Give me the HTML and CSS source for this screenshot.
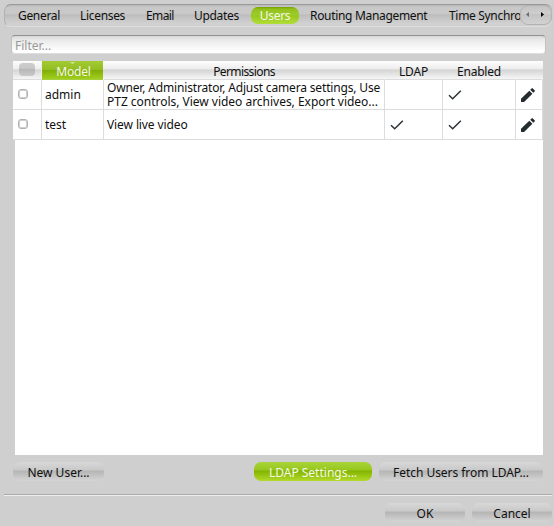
FILE: index.html
```html
<!DOCTYPE html>
<html lang="en">
<head>
<meta charset="utf-8">
<title>Users</title>
<link rel="stylesheet" href="styles.css">
</head>
<body>
<svg class="defs" aria-hidden="true">
  <symbol id="check" viewBox="0 0 14 12"><path d="M1 6.2 4.7 9.8 12.8 1.7" fill="none" stroke="#2b3236" stroke-width="1.5"/></symbol>
  <symbol id="pencil" viewBox="0 0 14 14"><path d="M0 14v-3.2L8.3 2.7l3.1 3.1L3.1 14zM9.2 1.8 10.6.4q.6-.6 1.2 0l1.8 1.8q.6.6 0 1.2l-1.3 1.4z" fill="#252c30"/></symbol>
</svg>
<nav class="tabs">
  <div class="tab-list">
    <a class="tab general">General</a>
    <a class="tab licenses">Licenses</a>
    <a class="tab email">Email</a>
    <a class="tab updates">Updates</a>
    <a class="tab active">Users</a>
    <a class="tab routing">Routing Management</a>
    <a class="tab time">Time Synchronization</a>
  </div>
  <div class="scroller"><i class="arrow left"></i><i class="arrow right"></i></div>
</nav>
<div class="filter">Filter...</div>
<main class="list">
  <div class="row head">
    <div><span class="check-all"></span></div>
    <div class="sorted"><span>Model</span></div>
    <div class="permissions">Permissions</div>
    <div>LDAP</div>
    <div class="enabled">Enabled</div>
    <div></div>
  </div>
  <div class="row">
    <div><span class="box"></span></div>
    <div>admin</div>
    <div class="perm"><span class="line1">Owner, Administrator, Adjust camera settings, Use</span><span class="line2">PTZ controls, View video archives, Export video...</span></div>
    <div></div>
    <div><svg class="check"><use href="#check"/></svg></div>
    <div><svg class="pencil"><use href="#pencil"/></svg></div>
  </div>
  <div class="row">
    <div><span class="box"></span></div>
    <div>test</div>
    <div><span class="live">View live video</span></div>
    <div><svg class="check"><use href="#check"/></svg></div>
    <div><svg class="check"><use href="#check"/></svg></div>
    <div><svg class="pencil"><use href="#pencil"/></svg></div>
  </div>
  <div class="blank"></div>
</main>
<div class="actions">
  <button class="new">New User...</button>
  <button class="primary">LDAP Settings...</button>
  <button class="fetch">Fetch Users from LDAP...</button>
</div>
<footer class="footer">
  <button>OK</button>
  <button>Cancel</button>
</footer>
</body>
</html>
```

FILE: styles.css
```css
* { box-sizing: border-box; }
body {
  margin: 0;
  padding: 4px 2px 0 4px;
  width: 554px;
  height: 526px;
  overflow: hidden;
  background: #cfcfcf;
  color: #101010;
  font: 12px/14px "Noto Sans", "Open Sans", sans-serif;
}
.defs { display: none; }
.tabs {
  display: flex;
  height: 23px;
  border-radius: 7px;
  border-top: 1px solid #999;
  border-left: 1px solid #b2b2b2;
  border-bottom: 1px solid #dedede;
  background: linear-gradient(#b9b9b9, #c8c8c8 12%, #c9c9c9 40%, #bdbdbd 47%, #d2d2d2 90%, #cdcdcd);
}
.tab-list { display: flex; flex: none; width: 516px; overflow: hidden; white-space: nowrap; padding: 2px 0 0 13px; letter-spacing: -0.32px; }
.tab { flex: none; line-height: 18px; height: 17px; }
.general { width: 62px; }
.licenses { width: 66px; }
.email { width: 48px; letter-spacing: -0.6px; }
.updates { width: 57px; }
.active {
  width: 48px;
  margin-right: 11px;
  text-align: center;
  color: #f4f8e4;
  border-radius: 7px;
  background: linear-gradient(#75a000, #93c01a 12%, #9dcb2c 45%, #98c81c 52%, #b2dd3c);
}
.routing { width: 139px; }
.scroller {
  display: flex;
  align-items: center;
  justify-content: space-between;
  width: 33px;
  height: 20px;
  margin-left: -1px;
  padding: 0 7px 1px 5px;
  border: 1px solid #b3b3b3;
  border-radius: 8px;
  background: linear-gradient(#c3c3c3, #cecece 40%, #c4c4c4 48%, #d2d2d2);
}
.arrow { width: 3px; height: 5px; background: #6c6c6c; clip-path: polygon(0 50%, 100% 0, 100% 100%); }
.arrow.right { background: #000; clip-path: polygon(0 0, 100% 50%, 0 100%); }
.filter {
  width: 535px;
  height: 19px;
  margin: 8px 0 0 7px;
  padding: 3px 0 0 3px;
  border: 1px solid #c1c1c1;
  border-top: 1px solid #929292;
  border-bottom-color: #dedede;
  border-radius: 4px;
  background: linear-gradient(#d8d8d8, #e8e8e8 20%, #fff 90%);
  color: #999;
}
.list { margin: 7px 0 0 9px; width: 530px; height: 394px; display: flex; flex-direction: column; }
.row {
  display: grid;
  grid-template-columns: 29px 62px 281px 58px 73px 27px;
  height: 30px;
  flex: none;
  background: #fff;
}
.row > div {
  display: flex;
  align-items: center;
  padding-left: 3px;
  border-right: 1px solid #dcdcdc;
  border-bottom: 1px solid #dcdcdc;
}
.row > div:first-child { padding-left: 5px; }
.row.head {
  height: 19px;
  background: linear-gradient(#fdfdfd, #eee 40%, #d5d5d5 48%, #f3f3f3 90%, #f3f3f3);
}
.head > div { justify-content: center; padding: 4px 0 0; border-right-color: transparent; letter-spacing: -0.2px; }
.head > .permissions { letter-spacing: -0.6px; }
.row.head > div:first-child { padding: 0 0 1px; border-right-color: #eee; }
.head > .sorted {
  margin-right: 1px;
  padding: 3px 0 0 2px;
  position: relative;
  color: #f4f8e4;
  border: 0;
  background: linear-gradient(#a3cc33, #94bd24 45%, #81ae08 50%, #9fcd1c 92%, #abcf50);
}
.sorted::before {
  content: "";
  position: absolute;
  top: 1px;
  left: 28px;
  width: 5px;
  height: 2px;
  background: #d4e6a0;
  clip-path: polygon(0 0, 100% 0, 50% 100%);
}
.check-all { width: 16px; height: 13px; border-radius: 4px; background: linear-gradient(#ccc, #c9c9c9 40%, #b8b8b8 50%, #c9c9c9); }
.box { width: 10px; height: 10px; margin-top: -1px; border: 1px solid #b1b1b1; border-radius: 3px; box-shadow: inset 0 0 0 1px #d0d0d0; }
.row > .perm { flex-direction: column; align-items: flex-start; justify-content: center; white-space: nowrap; }
.line1 { letter-spacing: -0.16px; }
.line2 { letter-spacing: -0.02px; }
.live { letter-spacing: -0.1px; }
.check { width: 14px; height: 12px; margin-left: 2px; }
.pencil { width: 14px; height: 14px; margin-left: 2px; }
.blank { flex: 1; margin: 0 0 0 2px; background: #fff; }
.actions { display: flex; margin: 7px 0 0 9px; height: 19px; }
button {
  width: 80px;
  height: 19px;
  padding: 3px 0 0;
  border: 0;
  border-radius: 7px;
  color: #101010;
  font: inherit;
  white-space: nowrap;
  background: linear-gradient(#d8d8d8, #c9c9c9 42%, #b5b5b5 48%, #d5d5d5);
}
.new { width: 91px; margin-right: 150px; }
.primary { width: 118px; margin-right: 7px; color: #f4f8e4; background: linear-gradient(#a8d438, #98c820 40%, #84b400 48%, #b2da2c); }
.fetch { width: 164px; letter-spacing: -0.05px; }
.footer {
  display: flex;
  justify-content: flex-end;
  gap: 7px;
  margin-top: 13px;
  padding-top: 8px;
  border-top: 1px solid #aaa;
  box-shadow: inset 0 1px #eee;
}
```
